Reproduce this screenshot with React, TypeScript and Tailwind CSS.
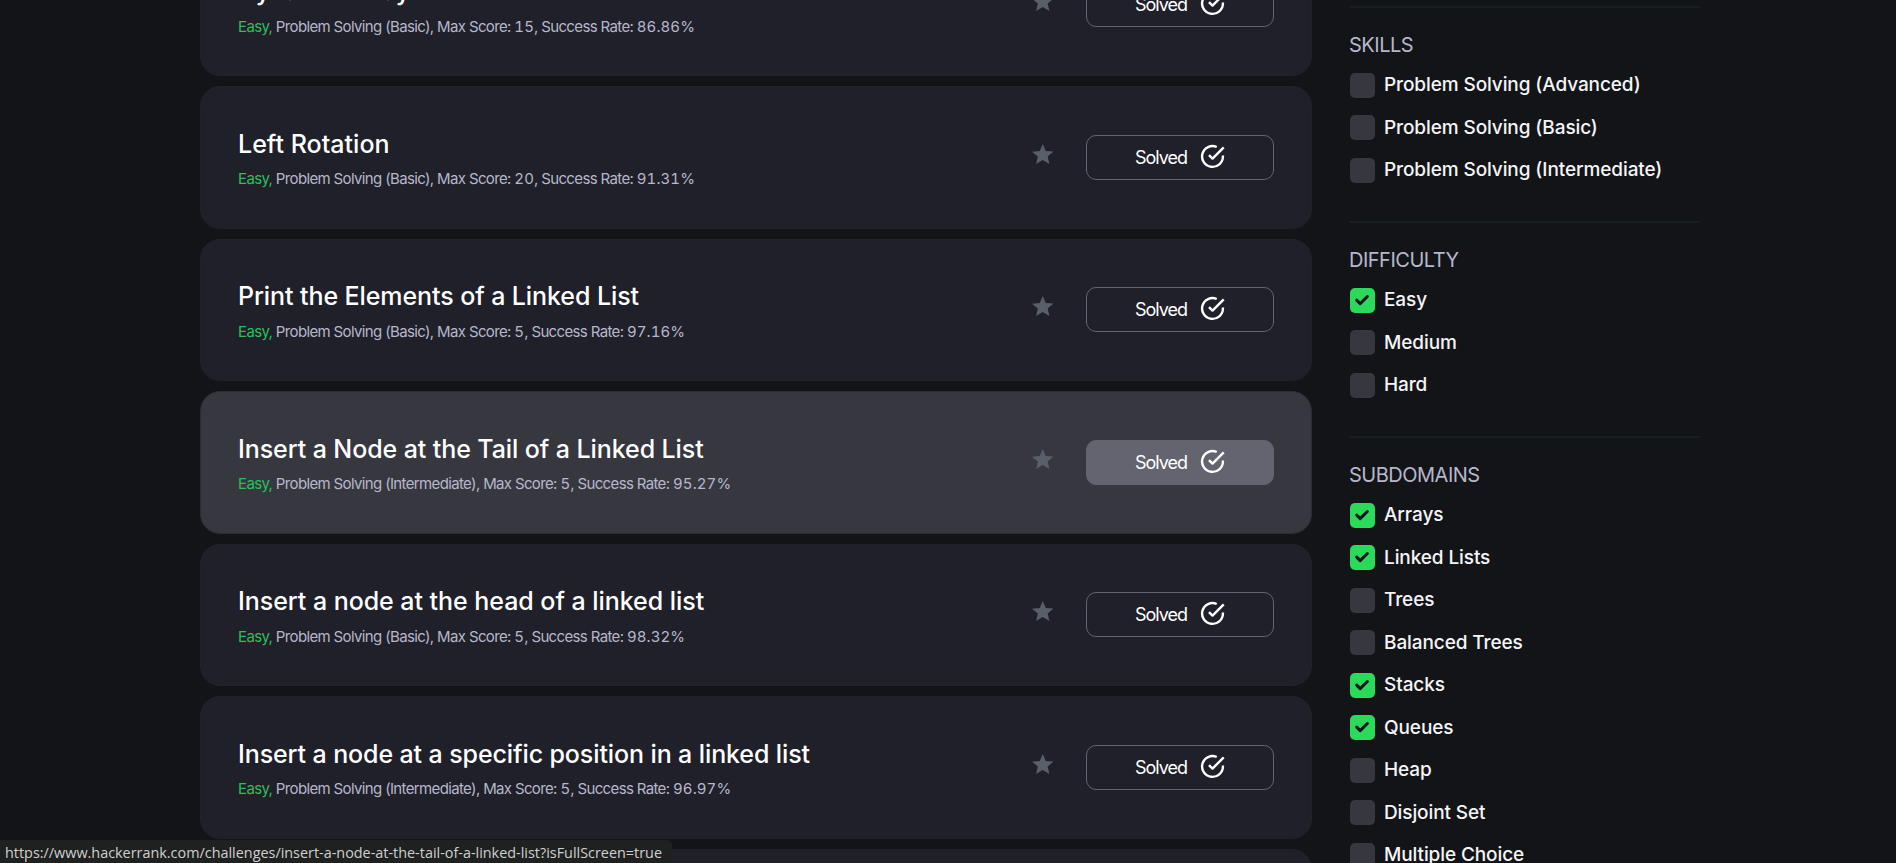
type Challenge = {
  title: string;
  skill: string;
  score: string;
  rate: string;
  hovered?: boolean;
  tracking?: string;
};

type Filter = { label: string; checked?: boolean };

const challenges: Challenge[] = [
  { title: "Dynamic Array", skill: "Basic", score: "15", rate: "86.86%", tracking: "tracking-[-0.38px]" },
  { title: "Left Rotation", skill: "Basic", score: "20", rate: "91.31%", tracking: "tracking-[0.02px]" },
  { title: "Print the Elements of a Linked List", skill: "Basic", score: "5", rate: "97.16%" },
  { title: "Insert a Node at the Tail of a Linked List", skill: "Intermediate", score: "5", rate: "95.27%", hovered: true },
  { title: "Insert a node at the head of a linked list", skill: "Basic", score: "5", rate: "98.32%", tracking: "tracking-[-0.05px]" },
  { title: "Insert a node at a specific position in a linked list", skill: "Intermediate", score: "5", rate: "96.97%", tracking: "tracking-[-0.11px]" },
  { title: "Get Node Value", skill: "Basic", score: "5", rate: "97.11%" },
];

const sections: { name: string; filters: Filter[] }[] = [
  {
    name: "SKILLS",
    filters: [
      { label: "Problem Solving (Advanced)" },
      { label: "Problem Solving (Basic)" },
      { label: "Problem Solving (Intermediate)" },
    ],
  },
  {
    name: "DIFFICULTY",
    filters: [{ label: "Easy", checked: true }, { label: "Medium" }, { label: "Hard" }],
  },
  {
    name: "SUBDOMAINS",
    filters: [
      { label: "Arrays", checked: true },
      { label: "Linked Lists", checked: true },
      { label: "Trees" },
      { label: "Balanced Trees" },
      { label: "Stacks", checked: true },
      { label: "Queues", checked: true },
      { label: "Heap" },
      { label: "Disjoint Set" },
      { label: "Multiple Choice" },
    ],
  },
];

function Star() {
  return (
    <svg viewBox="54 64 404 384" preserveAspectRatio="none" className="mb-[7px] h-5 w-[21.5px] fill-[#5a5e68]">
      <path d="M256 372.686L380.83 448l-33.021-142.066L458 210.409l-145.267-12.475L256 64l-56.743 133.934L54 210.409l110.192 95.525L131.161 448z" />
    </svg>
  );
}

function CheckCircle() {
  return (
    <svg
      viewBox="0 0 24 24"
      fill="none"
      stroke="currentColor"
      strokeWidth="2.3"
      strokeLinejoin="round"
      className="mb-0.5 size-[25px]"
    >
      <path d="M22 11.08V12a10 10 0 1 1-5.93-9.14" />
      <path d="M22.8 3.2 12 14.01l-3.4-3.4" />
    </svg>
  );
}

function ChallengeCard({ title, skill, score, rate, hovered, tracking }: Challenge) {
  return (
    <article
      className={`flex h-[142.5px] shrink-0 items-center justify-between rounded-[20px] border pl-[37px] pr-[37px] ${
        hovered ? "border-[#2b2c34] bg-[#373740]" : "border-[#22222b] bg-[#20202a]"
      }`}
    >
      <div className="mt-[3.6px] flex flex-col gap-[10.4px] whitespace-nowrap">
        <h2 className={`text-[25px] font-medium leading-[30px] text-white ${tracking ?? "tracking-[-0.09px]"}`}>{title}</h2>
        <p className="text-[15px] leading-5 tracking-[-0.64px] text-[#b7b7cb]">
          <span className="text-[#2bbf58]">Easy,</span> Problem Solving ({skill}), Max Score:{" "}
          <span className="tabular-nums tracking-[0.1px]">{score}</span>, Success Rate:{" "}
          <span className="tabular-nums tracking-[0.1px]">{rate}</span>
        </p>
      </div>
      <div className="flex items-center gap-[33px]">
        <Star />
        <button
          className={`flex h-[45px] w-[188px] items-center justify-center gap-[13px] rounded-[10px] border border-[#646470] text-white ${
            hovered ? "bg-[#646470]" : ""
          }`}
        >
          <span className="mt-px text-[18px] leading-6 tracking-[-1px]">Solved</span>
          <CheckCircle />
        </button>
      </div>
    </article>
  );
}

function FilterRow({ label, checked }: Filter) {
  return (
    <label className="flex h-[25px] items-center gap-[9px]">
      <span className={`flex size-[25px] rounded-[5px] ${checked ? "bg-[#2bd95b]" : "bg-[#373740]"}`}>
        {checked && (
          <svg viewBox="0 0 25 25" fill="none" stroke="#0b101c" strokeWidth="2.9" strokeLinecap="round" strokeLinejoin="round">
            <path d="M6.7 12.1 10.2 15.6 17.4 8.5" />
          </svg>
        )}
      </span>
      <span className="whitespace-nowrap text-[19px] font-medium leading-6 tracking-[-0.1px] text-[#f5f5f7]">{label}</span>
    </label>
  );
}

export default function App() {
  return (
    <div className="flex h-[863px] w-[1896px] overflow-hidden bg-[#131418] pl-[200px] font-['Inter',sans-serif]">
      <main className="-mt-[66.5px] flex w-[1112px] shrink-0 flex-col gap-[10px]">
        {challenges.map((c) => (
          <ChallengeCard key={c.title} {...c} />
        ))}
      </main>
      <aside className="ml-[38px] w-[350px] pt-1.5">
        {sections.map((s) => (
          <section key={s.name} className="border-t-2 border-[#181e25] pb-[38.5px] pt-[25px]">
            <h3 className="-ml-px mb-[15.5px] text-[20px] leading-6 tracking-[-0.5px] text-[#b7b7cb]">{s.name}</h3>
            <div className="flex flex-col gap-[17.5px]">
              {s.filters.map((f) => (
                <FilterRow key={f.label} {...f} />
              ))}
            </div>
          </section>
        ))}
      </aside>
      <div className="fixed bottom-0 left-0 h-[23px] w-[672px] whitespace-nowrap rounded-tr-[5px] bg-[#1f2020] pl-[5px] pt-px font-['Open_Sans',sans-serif] text-[14.4px] leading-6 text-[#cfcfcf]">
        https://www.hackerrank.com/challenges/insert-a-node-at-the-tail-of-a-linked-list?isFullScreen=true
      </div>
    </div>
  );
}
